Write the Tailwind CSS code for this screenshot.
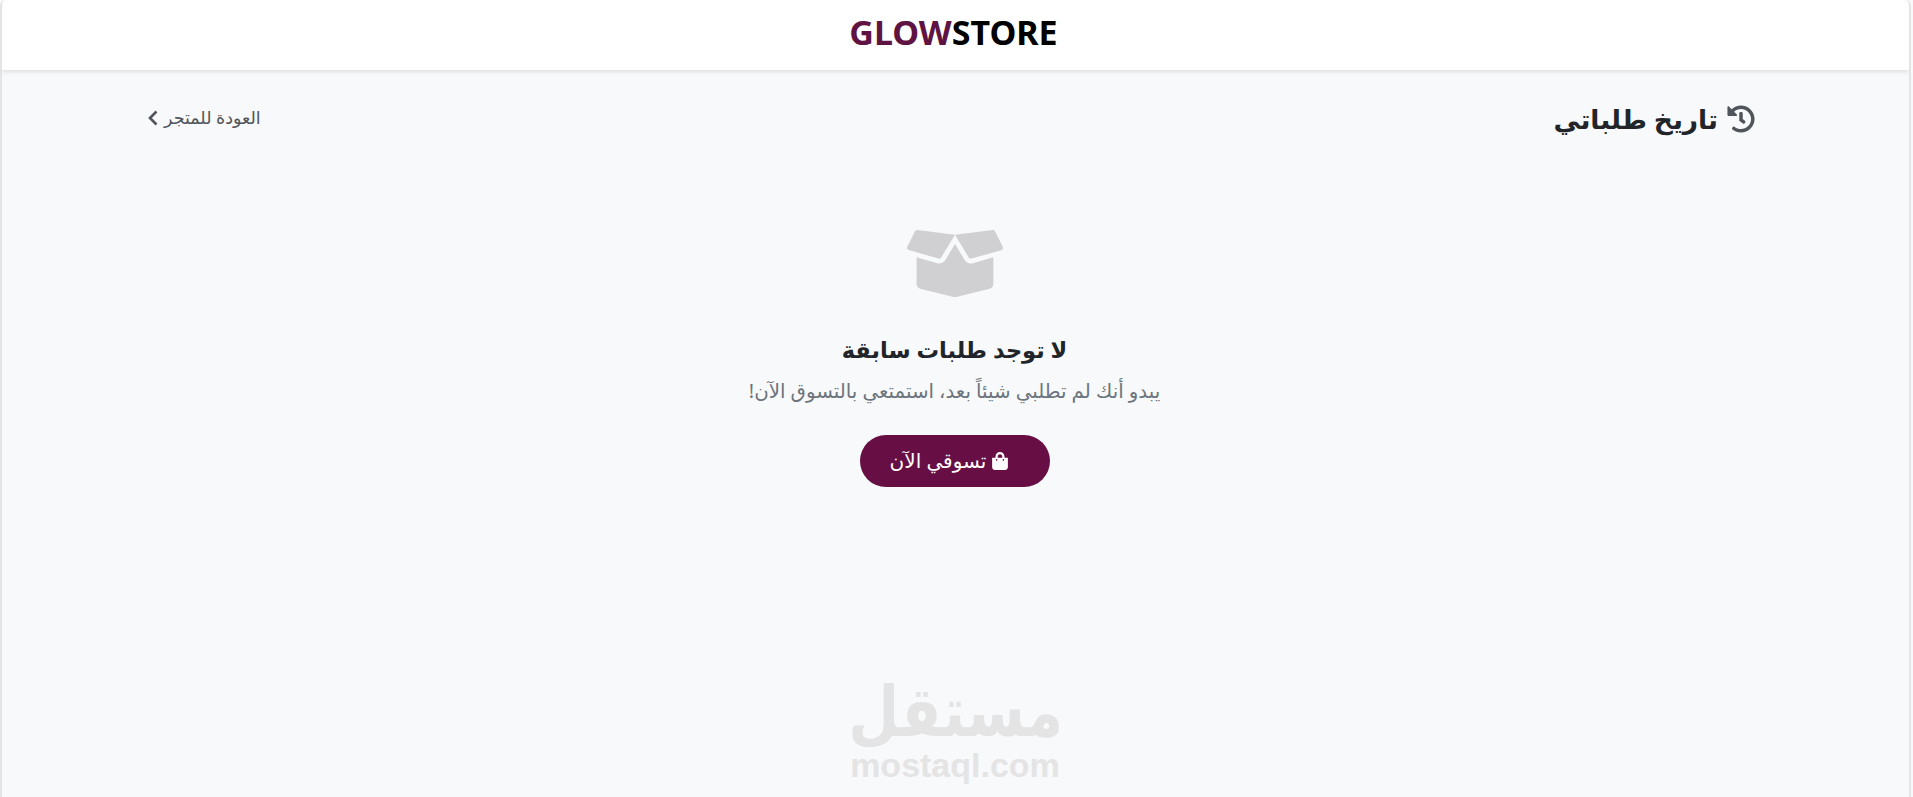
<!DOCTYPE html>
<html lang="ar" dir="rtl">
<head>
    <meta charset="UTF-8">
    <meta name="viewport" content="width=device-width, initial-scale=1.0">
    <title>تاريخ طلباتي</title>
    <script src="https://cdn.jsdelivr.net/npm/@tailwindcss/browser@4"></script>
</head>
<body class="bg-[#f8f9fa] font-['Noto_Sans','DejaVu_Sans',sans-serif]">
    <div class="relative h-[797px] mr-[2px] overflow-hidden border-x-2 border-[#e4e4e4] rounded-t-[6px]">
        <header class="h-[70px] bg-white shadow-[0_2px_4px_rgba(0,0,0,0.1)] flex items-center justify-center">
            <a dir="ltr" class="mb-[6px] mr-[4px] text-[34px] font-bold leading-none text-black">
                <span class="text-[#5f1343]">GLOW</span>STORE
            </a>
        </header>

        <main class="pl-[146px] pr-[154px]">
            <div class="pt-[31px] flex items-center justify-between">
                <h1 class="flex items-center gap-[9px] text-[26.500px] font-semibold leading-[36px] text-[#212529]">
                    <svg class="w-[28px] h-[28px] fill-[#4f555b]" viewBox="0 0 512 512"><path d="M504 255.531c.253 136.64-111.18 248.372-247.82 248.468-59.015.042-113.223-20.53-155.822-54.911-11.077-8.94-11.905-25.541-1.839-35.607l11.267-11.267c8.609-8.609 22.353-9.551 31.891-1.984C173.062 425.135 212.781 440 256 440c101.705 0 184-82.311 184-184 0-101.705-82.311-184-184-184-48.814 0-93.149 18.969-126.068 49.932l50.754 50.754c10.08 10.08 2.941 27.314-11.313 27.314H24c-8.837 0-16-7.163-16-16V38.627c0-14.254 17.234-21.393 27.314-11.314l49.372 49.372C129.209 34.136 189.552 8 256 8c136.81 0 247.747 110.78 248 247.531zm-180.912 78.784l9.823-12.63c8.138-10.463 6.253-25.542-4.21-33.679L288 256.349V152c0-13.255-10.745-24-24-24h-16c-13.255 0-24 10.745-24 24v135.651l65.409 50.874c10.463 8.137 25.541 6.253 33.679-4.21z"/></svg>
                    تاريخ طلباتي
                </h1>
                <a class="mb-[3px] flex items-center gap-[6px] text-[17.500px] text-[#4f555b]">
                    العودة للمتجر
                    <svg class="w-[10px] h-[16px] fill-none stroke-[#4f555b] stroke-[2.6]" viewBox="0 0 10 16"><path d="M8.500 1.500 2 8l6.500 6.500"/></svg>
                </a>
            </div>

            <section class="pt-[88px] pl-[6px] flex flex-col items-center text-center">
                <svg class="w-[96px] h-[77px] fill-[#d0d0d2]" viewBox="0 0 640 512"><path d="M425.7 256c-16.9 0-32.8-9-41.4-23.4L320 126l-64.200 106.600c-8.700 14.500-24.600 23.500-41.500 23.500-4.500 0-9-.6-13.300-1.900L64 215v178c0 14.700 10 27.500 24.200 31l216.200 54.100c10.200 2.500 20.900 2.500 31 0L551.800 424c14.200-3.600 24.200-16.400 24.200-31V215l-137 39.100c-4.300 1.300-8.800 1.900-13.300 1.900zm212.600-112.200L586.800 41c-3.100-6.200-9.800-9.800-16.700-8.900L320 64l91.700 152.100c3.800 6.300 11.400 9.300 18.500 7.300l197.900-56.500c9.900-2.900 14.700-13.900 10.200-23.100zM53.200 41L1.700 143.800c-4.600 9.200.3 20.200 10.100 23l197.900 56.500c7.100 2 14.700-1 18.500-7.300L320 64 69.800 32.100c-6.900-.8-13.500 2.700-16.600 8.900z"/></svg>
                <h2 class="mt-[32px] text-[22.500px] font-bold leading-[32px] text-[#212529]">لا توجد طلبات سابقة</h2>
                <p class="mt-[10px] text-[19.800px] leading-[30px] text-[#6c757d]">يبدو أنك لم تطلبي شيئاً بعد، استمتعي بالتسوق الآن!</p>
                <a class="mt-[29px] w-[190px] h-[52px] pr-[10px] rounded-full bg-[#670f45] text-white text-[20px] flex items-center justify-center gap-[5px]">
                    <svg class="w-[18px] h-[18px] fill-white" viewBox="0 0 448 512"><path d="M352 160v-32C352 57.420 294.579 0 224 0 153.420 0 96 57.420 96 128v32H0v272c0 44.183 35.817 80 80 80h288c44.183 0 80-35.817 80-80V160h-96zm-192-32c0-35.290 28.710-64 64-64s64 28.710 64 64v32H160v-32zm160 120c-13.255 0-24-10.745-24-24s10.745-24 24-24 24 10.745 24 24-10.745 24-24 24zm-192 0c-13.255 0-24-10.745-24-24s10.745-24 24-24 24 10.745 24 24-10.745 24-24 24z"/></svg>
                    تسوقي الآن
                </a>
            </section>
        </main>

        <!-- watermark -->
        <div class="absolute left-[848px] top-[671px] w-[210px] text-center text-[#e4e4e5] pointer-events-none">
            <div class="text-[70px] font-bold leading-[76px] scale-x-[0.84] translate-x-[20px]">مستقل</div>
            <div dir="ltr" class="font-['Liberation_Sans',sans-serif] text-[34px] font-bold leading-[36px]">mostaql.com</div>
        </div>
    </div>
</body>
</html>
